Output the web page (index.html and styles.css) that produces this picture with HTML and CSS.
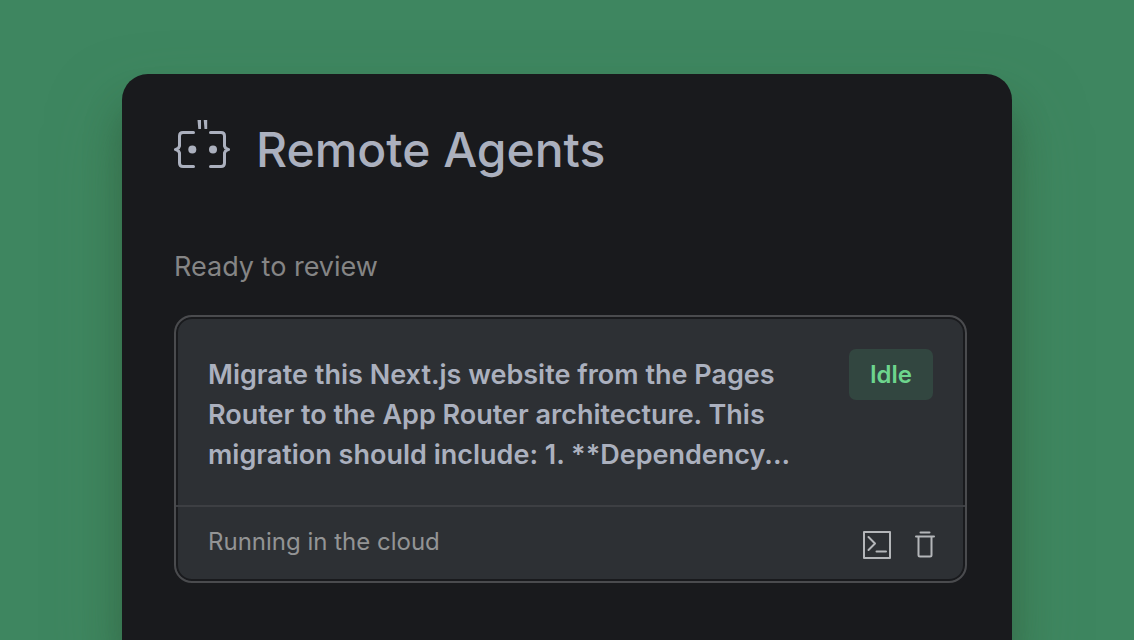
FILE: index.html
```html
<!DOCTYPE html>
<html lang="en">

<head>
    <meta charset="UTF-8">
    <meta name="viewport" content="width=device-width, initial-scale=1.0">
    <title>Remote Agents</title>
    <link rel="stylesheet" href="styles.css">
</head>

<body>
    <main class="panel">
        <header class="panel-header">
            <svg class="logo" viewBox="0 0 56 50" aria-hidden="true">
                <g fill="none" stroke="currentColor" stroke-width="3" stroke-linecap="round" stroke-linejoin="round">
                    <path d="M19.500 12.500H9Q5.500 12.500 5.500 16V26L4.500 28L1.500 29.500L4.500 31L5.500 33V43Q5.500 46.500 9 46.500H19.500" />
                    <path d="M36.500 12.500H47Q50.500 12.500 50.500 16V26L51.500 28L54.500 29.500L51.500 31L50.500 33V43Q50.500 46.500 47 46.500H36.500" />
                </g>
                <g fill="currentColor">
                    <circle cx="18.300" cy="29.500" r="4" />
                    <circle cx="39" cy="29.500" r="4" />
                    <path d="M23.500 0H27V9H24.300ZM29.700 0H33.200V9H30.500Z" />
                </g>
            </svg>
            <h1>Remote Agents</h1>
        </header>

        <section>
            <h2>Ready to review</h2>
            <article class="card">
                <div class="card-body">
                    <p class="prompt">Migrate this Next.js website from the Pages Router to the App Router architecture. This migration should include: 1. **Dependency...</p>
                    <span class="status">Idle</span>
                </div>
                <div class="card-footer">
                    <span>Running in the cloud</span>
                    <div class="actions">
                        <button type="button" aria-label="Open terminal">
                            <svg width="28" height="28" viewBox="0 0 28 28">
                                <path d="M1 1H27V27H1ZM5.500 6L12 12.500L5.500 19M13.500 20.500H23" />
                            </svg>
                        </button>
                        <button type="button" aria-label="Delete agent">
                            <svg width="20" height="28" viewBox="0 0 20 28">
                                <path d="M5.500 1.500H14.500M1 5.500H19M3.500 5.500V24Q3.500 25.500 5 25.500H15Q16.500 25.500 16.500 24V5.500" />
                            </svg>
                        </button>
                    </div>
                </div>
            </article>
        </section>
    </main>
</body>

</html>
```
FILE: styles.css
```css
:root {
    --green: #3e8660;
    --panel: #191a1d;
    --card: #2d3034;
    --border: #4a4b4e;
    --text: #abb0be;
    --muted: #858585;
}

* {
    box-sizing: border-box;
}

body {
    margin: 0;
    min-height: 100vh;
    padding: 74px 122px 0;
    display: flex;
    overflow: hidden;
    background-color: var(--green);
    color: var(--text);
    font-family: Inter, "Liberation Sans", sans-serif;
}

h1,
h2,
p {
    margin: 0;
}

.panel {
    flex: 1;
    padding: 44px 45px 0 52px;
    border-radius: 26px 26px 0 0;
    background-color: var(--panel);
    box-shadow: 0 40px 70px rgba(72, 128, 80, 0.5), 0 32px 36px rgba(20, 50, 35, 0.4);
}

.panel-header {
    display: flex;
    align-items: center;
    gap: 26px;
}

.logo {
    width: 56px;
    height: 50px;
    margin-bottom: 10px;
}

h1 {
    font-size: 48px;
    font-weight: 500;
    line-height: 64px;
}

h2 {
    margin: 67px 0 30px;
    color: var(--muted);
    font-size: 27px;
    font-weight: 400;
    line-height: 36px;
}

.card {
    border: 2px solid var(--border);
    border-radius: 18px;
    background-color: var(--card);
    box-shadow: inset 0 0 0 2px var(--panel);
}

.card-body {
    display: flex;
    justify-content: space-between;
    align-items: flex-start;
    padding: 32px 32px 30px;
}

.prompt {
    max-width: 600px;
    padding: 6px 0 0;
    font-size: 27px;
    font-weight: 600;
    line-height: 40px;
}

.status {
    padding: 0 21px;
    border-radius: 7px;
    background-color: #324640;
    color: #6dd58d;
    font-size: 24px;
    font-weight: 600;
    line-height: 51px;
}

.card-footer {
    display: flex;
    justify-content: space-between;
    align-items: center;
    padding: 17px 30px 21px 32px;
    border-top: 2px solid #3d3f43;
    color: #939495;
    font-size: 24px;
    line-height: 36px;
}

.actions {
    display: flex;
    gap: 24px;
}

.actions button {
    display: flex;
    padding: 6px 0 0;
    border: 0;
    background: none;
    color: #b4b6b9;
    cursor: pointer;
}

.actions svg {
    fill: none;
    stroke: currentColor;
    stroke-width: 2;
    stroke-linecap: round;
    stroke-linejoin: round;
}
```
